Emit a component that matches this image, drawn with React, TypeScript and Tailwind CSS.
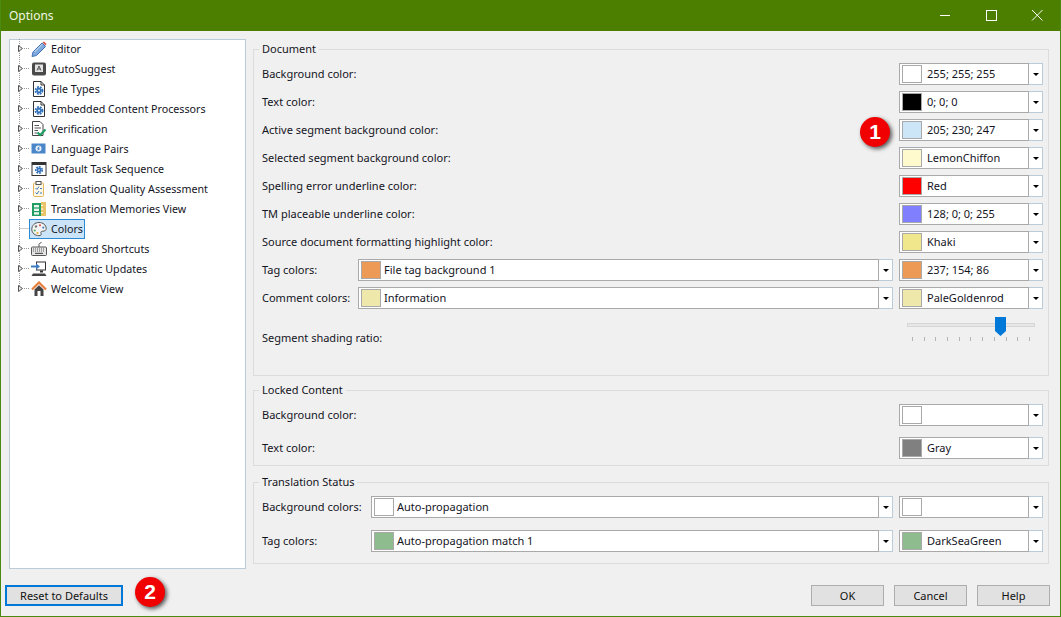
import type { ReactNode } from 'react';

function Gear({ x = 8, y = 9.5, r = 2.8 }: { x?: number; y?: number; r?: number }) {
    return (
        <g>
            <circle cx={x} cy={y} r={r + 0.8} fill="none" stroke="#2f6fb8" strokeWidth="1.6" strokeDasharray="1.9 1" />
            <circle cx={x} cy={y} r={r} fill="#2f6fb8" />
            <circle cx={x} cy={y} r={r * 0.34} fill="#ffffff" />
        </g>
    );
}

function PageGear() {
    return (
        <>
            <path d="M2.5 0.5H10L13.5 4V15.5H2.5Z" fill="#fff" stroke="#333" />
            <path d="M10 0.5V4H13.5" fill="none" stroke="#333" />
            <Gear />
        </>
    );
}

const icons: Record<string, ReactNode> = {
    pencil: (
        <>
            <path d="M1 15.5L2 11L11 2L14.5 5.5L5.5 14.5Z" fill="#7fa9dc" stroke="#3f72b5" />
            <path d="M3.5 11L11.5 3" stroke="#dbe8f6" strokeWidth="1" />
            <path d="M11.5 1.5L13 0.5L15.5 3L14.5 4.6Z" fill="#d9534f" />
        </>
    ),
    suggest: (
        <>
            <rect x="1" y="1.5" width="14" height="13" rx="2" fill="#4a4a4a" />
            <rect x="4" y="3.5" width="8" height="7.5" fill="#e4e4e4" />
            <path d="M6 9.5L8 5L10 9.5M6.8 8H9.2" fill="none" stroke="#4a4a4a" strokeWidth="0.9" />
        </>
    ),
    page: <PageGear />,
    verify: (
        <>
            <path d="M1.5 0.5H9L12 3.5V14.5H1.5Z" fill="#fff" stroke="#444" />
            <path d="M3.5 4.5H8M3.5 7H10M3.5 9.5H7M3.5 12H6" stroke="#555" />
            <path d="M6.5 11.5L9.2 14L14.5 8.5" fill="none" stroke="#1f9d63" strokeWidth="2.2" />
        </>
    ),
    language: (
        <>
            <rect x="0.5" y="2.5" width="14" height="10" fill="#4a86c8" />
            <circle cx="7.5" cy="7.5" r="3" fill="#e8f0f8" />
            <path d="M8.6 5.8L6.6 7.2L8.4 8L6.4 9.2" fill="none" stroke="#4a86c8" strokeWidth="1" />
        </>
    ),
    task: (
        <>
            <rect x="1" y="1.5" width="14" height="13" fill="#fff" stroke="#333" />
            <rect x="1" y="1.5" width="14" height="2.5" fill="#333" />
            <Gear x={8} y={9} r={2.4} />
        </>
    ),
    quality: (
        <>
            <rect x="2.5" y="2" width="10" height="13.5" rx="1" fill="#fff8e6" stroke="#e3b65b" />
            <rect x="5" y="0.5" width="5" height="3" fill="#fff" stroke="#555" />
            <path d="M4.5 7L6 8.5L8 5.5M4.5 11.5L6 13L8 10M9 7.5H11M9 12H11" fill="none" stroke="#3f7cc0" />
        </>
    ),
    memory: (
        <>
            <rect x="10" y="1" width="5" height="14" fill="#e9c46a" />
            <path d="M10 4.5h2M10 8h2M10 11.5h2" stroke="#fff" />
            <rect x="1" y="2" width="9" height="13" fill="#1f9d63" />
            <rect x="3" y="4" width="5" height="2.4" fill="#e9f6ef" />
            <rect x="3" y="7.6" width="5" height="2.4" fill="#e9f6ef" />
            <rect x="3" y="11.2" width="5" height="2.4" fill="#e9f6ef" />
        </>
    ),
    palette: (
        <>
            <path d="M8 1.5C3.5 1.5 0.8 4.7 0.8 8.2C0.8 12 4 14.7 8 14.7C10 14.7 10.6 13.6 10 12.4C9.4 11 10.2 10.2 11.6 10.2C14 10.2 15.2 9.2 15.2 7.4C15.2 4 12 1.5 8 1.5Z" fill="#f5f5f5" stroke="#555" />
            <circle cx="5" cy="5.5" r="1.2" fill="#777" />
            <circle cx="9" cy="4.3" r="1.1" fill="#d9534f" />
            <circle cx="12.3" cy="6.6" r="1.1" fill="#3f7cc0" />
            <circle cx="3.8" cy="9.5" r="1.1" fill="#5cae5c" />
            <circle cx="6.5" cy="12" r="1.1" fill="#e3b03b" />
        </>
    ),
    keyboard: (
        <>
            <path d="M8 6V3.5C8 2 10 2.5 10.5 1" fill="none" stroke="#555" />
            <rect x="0.5" y="6" width="15" height="8.5" rx="1" fill="#e6e6e6" stroke="#555" />
            <path d="M2 8h12M2 10h12" stroke="#555" strokeDasharray="1 1" />
            <path d="M4 12.4h8" stroke="#555" strokeWidth="1.2" />
        </>
    ),
    updates: (
        <>
            <rect x="5.5" y="1" width="9" height="8" fill="#fff" stroke="#333" />
            <path d="M9 9.5h3v2H9Z" fill="#333" />
            <path d="M2 12.5h12l1.5 2.5H0.5Z" fill="#444" />
            <path d="M0 4.5H5V2.2L9 5.5L5 8.8V6.5H0Z" fill="#3f7cc0" />
        </>
    ),
    home: (
        <>
            <path d="M1 8.5L8 1.5L15 8.5" fill="none" stroke="#e67e3c" strokeWidth="2.2" />
            <path d="M3.5 8.5L8 4.2L12.5 8.5V15H3.5Z" fill="#444" />
            <rect x="6.5" y="10" width="3" height="5" fill="#fff" />
        </>
    ),
};

const treeItems = [
    { label: 'Editor', icon: 'pencil' },
    { label: 'AutoSuggest', icon: 'suggest' },
    { label: 'File Types', icon: 'page' },
    { label: 'Embedded Content Processors', icon: 'page' },
    { label: 'Verification', icon: 'verify' },
    { label: 'Language Pairs', icon: 'language' },
    { label: 'Default Task Sequence', icon: 'task' },
    { label: 'Translation Quality Assessment', icon: 'quality' },
    { label: 'Translation Memories View', icon: 'memory' },
    { label: 'Colors', icon: 'palette', selected: true },
    { label: 'Keyboard Shortcuts', icon: 'keyboard' },
    { label: 'Automatic Updates', icon: 'updates' },
    { label: 'Welcome View', icon: 'home' },
];

function TreeRow({ label, icon, selected, last }: { label: string; icon: string; selected?: boolean; last?: boolean }) {
    return (
        <div className="flex h-[20px] items-center">
            <svg width="19" height="20" viewBox="0 0 19 20" className="shrink-0">
                <path d={last ? 'M9.5 0V10' : 'M9.5 0V20'} stroke="#9a9a9a" strokeDasharray="1 1" />
                <path d={selected ? 'M9.5 9.5H19' : 'M14 9.5H19'} stroke="#9a9a9a" strokeDasharray="1 1" />
                {!selected && <path d="M8.5 6.5L12.5 9.5L8.5 12.5Z" fill="#e8e8e8" stroke="#555" />}
            </svg>
            <div className={selected ? 'flex h-[20px] items-center border border-[#2a8ad4] bg-[#cce4f7] pr-[1px]' : 'flex h-[20px] items-center border border-transparent pr-[1px]'}>
                <svg width="16" height="16" viewBox="0 0 16 16" className="ml-[1px] shrink-0">
                    {icons[icon]}
                </svg>
                <span className="ml-[4px] whitespace-nowrap text-[10.7px]">{label}</span>
            </div>
        </div>
    );
}

function Combo({ text, color, width, textGap = 'ml-[5px]' }: { text?: string; color?: string; width: string; textGap?: string }) {
    return (
        <div className={`flex h-[22px] shrink-0 ${width}`}>
            <div className="flex min-w-0 flex-1 items-center border border-[#a9a9a9] bg-white pl-[2px]">
                <span className="h-[18px] w-[20px] shrink-0 border border-[#a9a9a9]" style={{ backgroundColor: color ?? '#ffffff' }} />
                {text && <span className={`${textGap} whitespace-nowrap`}>{text}</span>}
            </div>
            <div className="flex w-[14px] shrink-0 items-center justify-center border border-l-0 border-[#bccbd8] bg-white">
                <span className="h-0 w-0 border-x-[3px] border-t-[3px] border-x-transparent border-t-black" />
            </div>
        </div>
    );
}

function ColorRow({ label, text, color }: { label: string; text: string; color: string }) {
    return (
        <div className="flex items-center justify-between">
            <span>{label}</span>
            <Combo text={text} color={color} width="w-[144px]" />
        </div>
    );
}

function DoubleRow({ label, name, nameColor, text, color, wideWidth }: { label: string; name: string; nameColor: string; text?: string; color: string; wideWidth: string }) {
    return (
        <div className="flex items-center justify-between">
            <span>{label}</span>
            <div className="flex gap-[6px]">
                <Combo text={name} color={nameColor} width={wideWidth} textGap="ml-[3px]" />
                <Combo text={text} color={color} width="w-[144px]" />
            </div>
        </div>
    );
}

function Group({ title, className, children }: { title: string; className: string; children: ReactNode }) {
    return (
        <fieldset className={`flex flex-col border border-[#dcdcdc] pl-[8px] pr-[5px] ${className}`}>
            <legend className="-ml-[3px] px-[3px] leading-[16px]">{title}</legend>
            {children}
        </fieldset>
    );
}

function ShadingSlider() {
    return (
        <div className="relative mr-[8px] h-[26px] w-[128px]">
            <div className="mt-[8px] h-[4px] border border-[#d6d6d6] bg-[#e7e7e7]" />
            <svg width="11" height="19" viewBox="0 0 11 19" className="absolute left-[88px] top-[2px]">
                <path d="M0 0H11V14L5.5 19L0 14Z" fill="#0078d7" />
            </svg>
            <div className="mt-[10px] flex justify-between pl-[5px] pr-[5px]">
                {Array.from({ length: 11 }).map((_, i) => (
                    <span key={i} className="h-[4px] w-px bg-[#b5b5b5]" />
                ))}
            </div>
        </div>
    );
}

function Badge({ n, className }: { n: number; className: string }) {
    return (
        <div className={`absolute flex h-[30px] w-[30px] items-center justify-center rounded-full bg-[#f00000] font-['Liberation_Sans',sans-serif] text-[21px] font-bold text-white shadow-[2px_2px_4px_rgba(0,0,0,0.65)] ${className}`}>
            {n}
        </div>
    );
}

function DialogButton({ label }: { label: string }) {
    return <button className="h-[21px] w-[73px] border border-[#adadad] bg-[#e1e1e1] pt-px text-[#111]">{label}</button>;
}

export default function App() {
    return (
        <div className="relative flex h-[617px] w-[1061px] flex-col overflow-hidden border border-t-0 border-[#4b8a10] bg-[#f0f0f0] font-['Noto_Sans','Open_Sans',sans-serif] text-[11px] text-[#14141e]">
            <div className="-mx-px flex h-[31px] shrink-0 items-center justify-between bg-[#4c7f00] pl-[9px] text-[12px] text-[#f0f5e6]">
                <span>Options</span>
                <div className="flex items-center">
                    <svg width="46" height="31" viewBox="0 0 46 31"><path d="M17 15.5H27" stroke="#fff" /></svg>
                    <svg width="46" height="31" viewBox="0 0 46 31"><rect x="17.5" y="10.5" width="10" height="10" fill="none" stroke="#fff" /></svg>
                    <svg width="46" height="31" viewBox="0 0 46 31"><path d="M17 10L27.5 20.5M27.5 10L17 20.5" stroke="#fff" /></svg>
                </div>
            </div>

            <div className="flex flex-1 gap-[7px] pl-[8px] pt-[8px]">
                <div className="h-[530px] w-[237px] border border-[#bccbd8] bg-white">
                    <div className="-mt-px">
                        {treeItems.map((item, i) => (
                            <TreeRow key={item.label} {...item} last={i === treeItems.length - 1} />
                        ))}
                    </div>
                </div>

                <div className="flex w-[796px] flex-col pt-[2px]">
                    <Group title="Document" className="gap-[6px] pb-[29px] pt-[6px]">
                        <ColorRow label="Background color:" text="255; 255; 255" color="#ffffff" />
                        <ColorRow label="Text color:" text="0; 0; 0" color="#000000" />
                        <ColorRow label="Active segment background color:" text="205; 230; 247" color="#cde6f7" />
                        <ColorRow label="Selected segment background color:" text="LemonChiffon" color="#fffacd" />
                        <ColorRow label="Spelling error underline color:" text="Red" color="#ff0000" />
                        <ColorRow label="TM placeable underline color:" text="128; 0; 0; 255" color="#8080ff" />
                        <ColorRow label="Source document formatting highlight color:" text="Khaki" color="#f0e68c" />
                        <DoubleRow label="Tag colors:" name="File tag background 1" nameColor="#ed9a56" text="237; 154; 86" color="#ed9a56" wideWidth="w-[535px]" />
                        <DoubleRow label="Comment colors:" name="Information" nameColor="#eee8aa" text="PaleGoldenrod" color="#eee8aa" wideWidth="w-[535px]" />
                        <div className="flex h-[31px] items-start justify-between">
                            <span className="self-end leading-[16px]">Segment shading ratio:</span>
                            <ShadingSlider />
                        </div>
                    </Group>

                    <Group title="Locked Content" className="mt-[6px] gap-[11px] pb-[6px] pt-[6px]">
                        <div className="flex items-center justify-between">
                            <span>Background color:</span>
                            <Combo color="#ffffff" width="w-[144px]" />
                        </div>
                        <ColorRow label="Text color:" text="Gray" color="#808080" />
                    </Group>

                    <Group title="Translation Status" className="mt-[8px] gap-[12px] pb-[11px] pt-[6px]">
                        <DoubleRow label="Background colors:" name="Auto-propagation" nameColor="#ffffff" color="#ffffff" wideWidth="w-[522px]" />
                        <DoubleRow label="Tag colors:" name="Auto-propagation match 1" nameColor="#8fbc8f" text="DarkSeaGreen" color="#8fbc8f" wideWidth="w-[522px]" />
                    </Group>
                </div>
            </div>

            <div className="flex shrink-0 items-start justify-between pb-[10px] pl-[4px] pr-[10px] pt-[16px]">
                <button className="h-[21px] w-[118px] border-2 border-[#0078d7] bg-[#e1e1e1] pt-px text-[#111]">Reset to Defaults</button>
                <div className="flex gap-[10px]">
                    <DialogButton label="OK" />
                    <DialogButton label="Cancel" />
                    <DialogButton label="Help" />
                </div>
            </div>

            <Badge n={1} className="left-[859px] top-[117px]" />
            <Badge n={2} className="left-[134px] top-[577px]" />
        </div>
    );
}
